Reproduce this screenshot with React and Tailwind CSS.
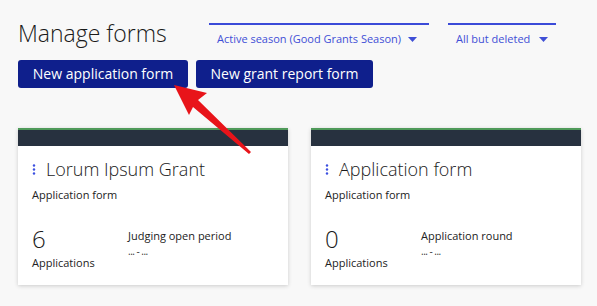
import React from "react";

function Dots() {
  return (
    <svg width="4" height="11" viewBox="0 0 4 11" className="shrink-0">
      <circle cx="2" cy="1.5" r="1.2" fill="#3b4fe0" />
      <circle cx="2" cy="5.5" r="1.2" fill="#3b4fe0" />
      <circle cx="2" cy="9.5" r="1.2" fill="#3b4fe0" />
    </svg>
  );
}

function Caret() {
  return (
    <svg width="9" height="5" viewBox="0 0 9 5" className="shrink-0">
      <path d="M0 0 L9 0 L4.5 5 Z" fill="#3f4fd6" />
    </svg>
  );
}

function Card({ title, count, label }) {
  return (
    <div className="w-[270px] h-[157px] bg-white shadow-[0_1px_4px_rgba(0,0,0,0.18)] flex flex-col">
      <div className="h-[2px] bg-[#4f9a5a]" />
      <div className="h-[16px] bg-[#27313f]" />
      <div className="flex flex-col pl-[14px] pt-[11px]">
        <div className="flex items-center gap-[10px] h-[24px]">
          <Dots />
          <span className="text-[18px] font-light text-[#1a1a1a] leading-none whitespace-nowrap">{title}</span>
        </div>
        <div className="text-[11px] text-[#222] mt-[6px] leading-[16px]">Application form</div>
        <div className="flex mt-[22px]">
          <div className="w-[96px] flex flex-col">
            <span className="text-[24px] font-light text-[#1a1a1a] leading-[28px]">{count}</span>
            <span className="text-[11px] text-[#222] leading-[16px] mt-[2px]">Applications</span>
          </div>
          <div className="flex flex-col pt-[3px]">
            <span className="text-[11px] text-[#222] leading-[16px] whitespace-nowrap">{label}</span>
            <span className="text-[10px] text-[#333] leading-[12px] mt-[1px] tracking-[-0.5px]">... - ...</span>
          </div>
        </div>
      </div>
    </div>
  );
}

export default function App() {
  return (
    <div
      className="relative w-[597px] h-[306px] bg-[#f8f8f8] overflow-hidden"
      style={{ fontFamily: '"Open Sans", "Noto Sans", sans-serif' }}
    >
      <div className="flex flex-col pl-[18px] pt-[17px]">
        <div className="flex items-start h-[43px]">
          <h1 className="text-[23px] font-light text-[#1a1a1a] leading-[32px] w-[191px] whitespace-nowrap">Manage forms</h1>
          <div className="flex gap-[19px] mt-[6px]">
            <div className="w-[220px] border-t-2 border-[#3b4bd8] pt-[6px] pl-[8px] flex items-center gap-[7px]">
              <span className="text-[11px] text-[#3f4fd6] leading-[16px] whitespace-nowrap">Active season (Good Grants Season)</span>
              <Caret />
            </div>
            <div className="w-[108px] border-t-2 border-[#3b4bd8] pt-[6px] pl-[8px] flex items-center gap-[9px]">
              <span className="text-[11px] text-[#3f4fd6] leading-[16px] whitespace-nowrap">All but deleted</span>
              <Caret />
            </div>
          </div>
        </div>
        <div className="flex gap-[8px]">
          <button className="w-[170px] h-[28px] bg-[#0f1f8c] rounded-[3px] text-white text-[14px] leading-none">New application form</button>
          <button className="w-[177px] h-[28px] bg-[#0f1f8c] rounded-[3px] text-white text-[14px] leading-none">New grant report form</button>
        </div>
        <div className="flex gap-[23px] mt-[40px]">
          <Card title="Lorum Ipsum Grant" count="6" label="Judging open period" />
          <Card title="Application form" count="0" label="Application round" />
        </div>
      </div>
      <svg className="absolute left-0 top-0" width="597" height="306" viewBox="0 0 597 306">
        <path
          d="M174 85 L207 93 L198 100 L251 152 L249 154 L193 107 L189 115 Z"
          fill="#e8141a"
        />
      </svg>
    </div>
  );
}
